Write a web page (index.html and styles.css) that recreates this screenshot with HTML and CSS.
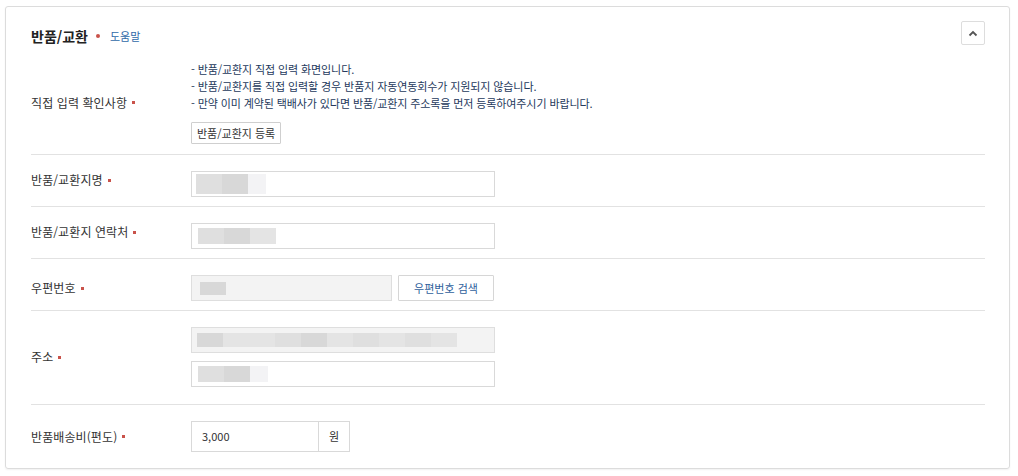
FILE: index.html
```html
<!DOCTYPE html>
<html lang="ko">
<head>
    <meta charset="UTF-8">
    <meta name="viewport" content="width=device-width, initial-scale=1.0">
    <title>반품/교환</title>
    <link rel="stylesheet" href="styles.css">
</head>
<body>

<div class="panel">
    <div class="panel-head">
        <h2 class="panel-title">반품/교환 <span class="dot"></span> <a href="#" class="help">도움말</a></h2>
        <button type="button" class="fold" aria-label="접기">
            <svg width="10" height="7" viewBox="0 0 10 7"><path d="M1.5 5.5 L5 2 L8.5 5.5" fill="none" stroke="#555" stroke-width="1.8"/></svg>
        </button>
    </div>

    <div class="row row-notice">
        <div class="label">직접 입력 확인사항<span class="req"></span></div>
        <div class="field">
            <ul class="notes">
                <li>- 반품/교환지 직접 입력 화면입니다.</li>
                <li>- 반품/교환지를 직접 입력할 경우 반품지 자동연동회수가 지원되지 않습니다.</li>
                <li>- 만약 이미 계약된 택배사가 있다면 반품/교환지 주소록을 먼저 등록하여주시기 바랍니다.</li>
            </ul>
            <button type="button" class="btn">반품/교환지 등록</button>
        </div>
    </div>

    <div class="row row-up">
        <div class="label">반품/교환지명<span class="req"></span></div>
        <div class="field">
            <div class="input wide">
                <span class="mask tall"><i class="s2"></i><i class="s3"></i><i class="s5"></i></span>
            </div>
        </div>
    </div>

    <div class="row row-up">
        <div class="label">반품/교환지 연락처<span class="req"></span></div>
        <div class="field">
            <div class="input wide">
                <span class="mask"><i class="s2"></i><i class="s3"></i><i class="s4"></i></span>
            </div>
        </div>
    </div>

    <div class="row">
        <div class="label">우편번호<span class="req"></span></div>
        <div class="field inline">
            <div class="input zip readonly">
                <span class="mask short"><i class="s3"></i></span>
            </div>
            <button type="button" class="btn btn-blue">우편번호 검색</button>
        </div>
    </div>

    <div class="row row-addr">
        <div class="label">주소<span class="req"></span></div>
        <div class="field stack">
            <div class="input wide readonly">
                <span class="mask slim"><i class="s3"></i><i class="s4"></i><i class="s4"></i><i class="s2"></i><i class="s3"></i><i class="s4"></i><i class="s2"></i><i class="s4"></i><i class="s2"></i><i class="s4"></i></span>
            </div>
            <div class="input wide">
                <span class="mask"><i class="s2"></i><i class="s3"></i><i class="s5"></i></span>
            </div>
        </div>
    </div>

    <div class="row row-last">
        <div class="label">반품배송비(편도)<span class="req"></span></div>
        <div class="field">
            <div class="price">
                <span class="price-value">3,000</span>
                <span class="price-unit">원</span>
            </div>
        </div>
    </div>
</div>

</body>
</html>
```

FILE: styles.css
```css
body {
    margin: 0;
    padding: 6px 8px 6px 5px;
    background-color: #fff;
    font-family: "Noto Sans CJK KR", "Noto Sans", sans-serif;
    color: #333;
}
.panel {
    border: 1px solid #dcdcdc;
    border-radius: 3px;
    box-shadow: 0 1px 2px rgba(0, 0, 0, 0.06);
    padding: 14px 24px 0 25px;
}
.panel-head {
    display: flex;
    justify-content: space-between;
    align-items: flex-start;
    height: 24px;
}
.panel-title {
    margin: 0;
    padding-top: 5px;
    font-size: 14px;
    font-weight: bold;
    line-height: 20px;
    color: #222;
    display: flex;
    align-items: center;
}
.dot {
    display: inline-block;
    width: 4px;
    height: 4px;
    border-radius: 50%;
    background-color: #c9524a;
    margin: 0 10px 0 8px;
}
.help {
    font-size: 11px;
    font-weight: normal;
    color: #2f69a8;
    text-decoration: none;
}
.fold {
    width: 24px;
    height: 24px;
    padding: 0;
    border: 1px solid #ddd;
    background-color: #fff;
    border-radius: 2px;
    display: flex;
    align-items: center;
    justify-content: center;
}
.row {
    display: flex;
    align-items: center;
    padding: 16px 0 9px;
    border-bottom: 1px solid #e2e2e2;
}
.row-notice {
    padding: 16px 0 10px;
}
.row-addr {
    padding: 16px 0 17px;
}
.row-last {
    border-bottom: none;
    padding: 16px 0 16px;
}
.label {
    width: 160px;
    font-size: 12px;
    letter-spacing: 0.1px;
    line-height: 16px;
    color: #333;
    display: flex;
    align-items: center;
}
.row-up .label {
    margin-top: -8px;
}
.req {
    display: inline-block;
    width: 3px;
    height: 3px;
    background-color: #c9524a;
    margin-left: 5px;
}
.field {
    flex: 1;
}
.inline {
    display: flex;
    gap: 6px;
}
.stack {
    display: flex;
    flex-direction: column;
    gap: 8px;
}
.notes {
    list-style: none;
    margin: 0 0 7px;
    padding: 0;
    font-size: 11px;
    letter-spacing: -0.1px;
    line-height: 17px;
    color: #25395c;
}
.btn {
    font-family: inherit;
    font-size: 11px;
    height: 22px;
    padding: 0 5px;
    border: 1px solid #cfcfcf;
    background-color: #fff;
    color: #333;
    border-radius: 1px;
}
.btn-blue {
    width: 96px;
    height: 26px;
    color: #2f5f9c;
    border-color: #d6d6d6;
}
.input {
    box-sizing: border-box;
    height: 26px;
    border: 1px solid #d9d9d9;
    background-color: #fff;
    display: flex;
    align-items: center;
    padding-left: 4px;
}
.wide {
    width: 304px;
}
.zip {
    width: 201px;
}
.readonly {
    background-color: #f3f3f3;
    border-color: #dedede;
}
.mask {
    display: flex;
    height: 16px;
    margin-left: 2px;
}
.mask.tall {
    height: 20px;
    margin-left: 0;
}
.mask.slim {
    height: 14px;
    margin-left: 1px;
}
.mask.short {
    height: 13px;
    margin-left: 4px;
}
.mask i {
    display: block;
    width: 26px;
}
.s2 { background-color: #dfdfdf; }
.s3 { background-color: #d8d8d8; }
.s4 { background-color: #e4e4e4; }
.s5 { background-color: #f3f3f5; width: 18px !important; }
.price {
    display: flex;
    width: 159px;
    height: 31px;
    box-sizing: border-box;
    border: 1px solid #d9d9d9;
    font-size: 11px;
}
.price-value {
    flex: 1;
    padding-left: 10px;
    line-height: 29px;
    border-right: 1px solid #d9d9d9;
}
.price-unit {
    width: 30px;
    text-align: center;
    line-height: 29px;
}
```
